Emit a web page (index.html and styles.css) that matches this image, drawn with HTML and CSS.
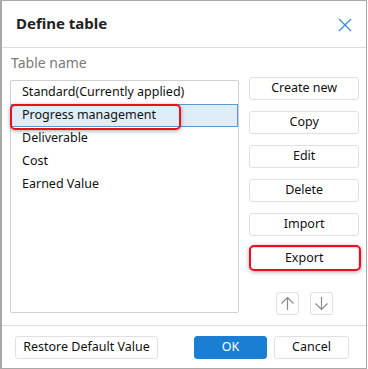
FILE: index.html
```html
<!DOCTYPE html>
<html lang="en">
<head>
    <meta charset="UTF-8">
    <meta name="viewport" content="width=device-width, initial-scale=1.0">
    <title>Define table</title>
    <link rel="stylesheet" href="styles.css">
</head>
<body>
    <div class="dialog">
        <div class="header">
            <h1>Define table</h1>
            <svg class="close" width="14" height="14" viewBox="0 0 14 14">
                <path d="M1 1 L13 13 M13 1 L1 13" stroke="#3d8fdb" stroke-width="1.4" fill="none"/>
            </svg>
        </div>

        <div class="body">
            <div class="left">
                <div class="label">Table name</div>
                <div class="list">
                    <div class="item">Standard(Currently applied)</div>
                    <div class="item selected">Progress management
                        <span class="mark mark-row"></span>
                    </div>
                    <div class="item">Deliverable</div>
                    <div class="item">Cost</div>
                    <div class="item">Earned Value</div>
                </div>
            </div>

            <div class="right">
                <button class="btn">Create new</button>
                <button class="btn">Copy</button>
                <button class="btn">Edit</button>
                <button class="btn">Delete</button>
                <button class="btn">Import</button>
                <button class="btn marked">Export
                    <span class="mark mark-btn"></span>
                </button>
                <div class="arrows">
                    <button class="arrow">
                        <svg width="15" height="15" viewBox="0 0 15 15">
                            <path d="M7.5 14 V1.5 M1.5 7.5 L7.5 1.5 L13.5 7.5" stroke="#8a8a8a" stroke-width="1.2" fill="none"/>
                        </svg>
                    </button>
                    <button class="arrow">
                        <svg width="15" height="15" viewBox="0 0 15 15">
                            <path d="M7.5 1 V13.5 M1.5 7.5 L7.5 13.5 L13.5 7.5" stroke="#8a8a8a" stroke-width="1.2" fill="none"/>
                        </svg>
                    </button>
                </div>
            </div>
        </div>

        <div class="footer">
            <button class="btn btn-restore">Restore Default Value</button>
            <div class="footer-right">
                <button class="btn btn-ok">OK</button>
                <button class="btn btn-cancel">Cancel</button>
            </div>
        </div>
    </div>
</body>
</html>
```

FILE: styles.css
```css
body {
    margin: 0;
    font-family: "Noto Sans", Arial, sans-serif;
    font-size: 12.5px;
    color: #111;
}
.dialog {
    width: 367px;
    height: 369px;
    box-sizing: border-box;
    border: 1px solid #a8a8a8;
    border-left-width: 2px;
    background: #fff;
    display: flex;
    flex-direction: column;
}
.header {
    height: 46px;
    border-bottom: 1px solid #dcdcdc;
    display: flex;
    align-items: center;
    justify-content: space-between;
    padding: 0 14px 0 14px;
}
.header h1 {
    margin: 0 0 2px 0;
    font-size: 15px;
    font-weight: bold;
    color: #222;
}
.close {
    margin-top: 1px;
}
.body {
    display: flex;
    padding: 0 7px 0 8px;
    height: 277px;
}
.left {
    width: 230px;
}
.label {
    color: #7a7a7a;
    font-size: 14px;
    height: 32px;
    line-height: 30px;
    padding-left: 1px;
}
.list {
    border: 1px solid #cfcfcf;
    border-radius: 2px;
    height: 233px;
    box-sizing: border-box;
}
.item {
    position: relative;
    height: 23px;
    line-height: 20px;
    padding-left: 10px;
    border: 1px solid transparent;
    box-sizing: border-box;
}
.item.selected {
    background: #dfedf8;
    border-color: #5a9ad6;
}
.mark {
    position: absolute;
    border: 2px solid #e8101a;
    border-radius: 5px;
    box-shadow: 0 1px 4px rgba(0, 0, 0, 0.35);
    pointer-events: none;
}
.mark-row {
    left: -2px;
    top: -1px;
    width: 167px;
    height: 22px;
}
.right {
    margin-left: 10px;
    width: 110px;
    display: flex;
    flex-direction: column;
    gap: 11px;
    padding-top: 29px;
}
.btn {
    position: relative;
    font-family: inherit;
    font-size: 12.5px;
    line-height: 20px;
    color: #111;
    background: #fff;
    border: 1px solid #e0e0e0;
    border-radius: 3px;
    height: 23px;
    padding: 0 0 1px 0;
    box-sizing: border-box;
}
.mark-btn {
    left: -1px;
    top: -3px;
    right: -3px;
    bottom: -2px;
}
.arrows {
    display: flex;
    justify-content: center;
    gap: 11px;
    margin-top: 11px;
}
.arrow {
    width: 23px;
    height: 23px;
    border: 1px solid #e0e0e0;
    border-radius: 3px;
    background: #fff;
    padding: 0;
    display: flex;
    align-items: center;
    justify-content: center;
}
.footer {
    border-top: 1px solid #dcdcdc;
    flex: 1;
    display: flex;
    align-items: center;
    justify-content: space-between;
    padding: 0 17px 0 13px;
}
.btn-restore {
    width: 143px;
}
.footer-right {
    display: flex;
    gap: 7px;
}
.btn-ok {
    width: 73px;
    background: #1a7fd3;
    border-color: #1a7fd3;
    color: #fff;
}
.btn-cancel {
    width: 75px;
}
```
